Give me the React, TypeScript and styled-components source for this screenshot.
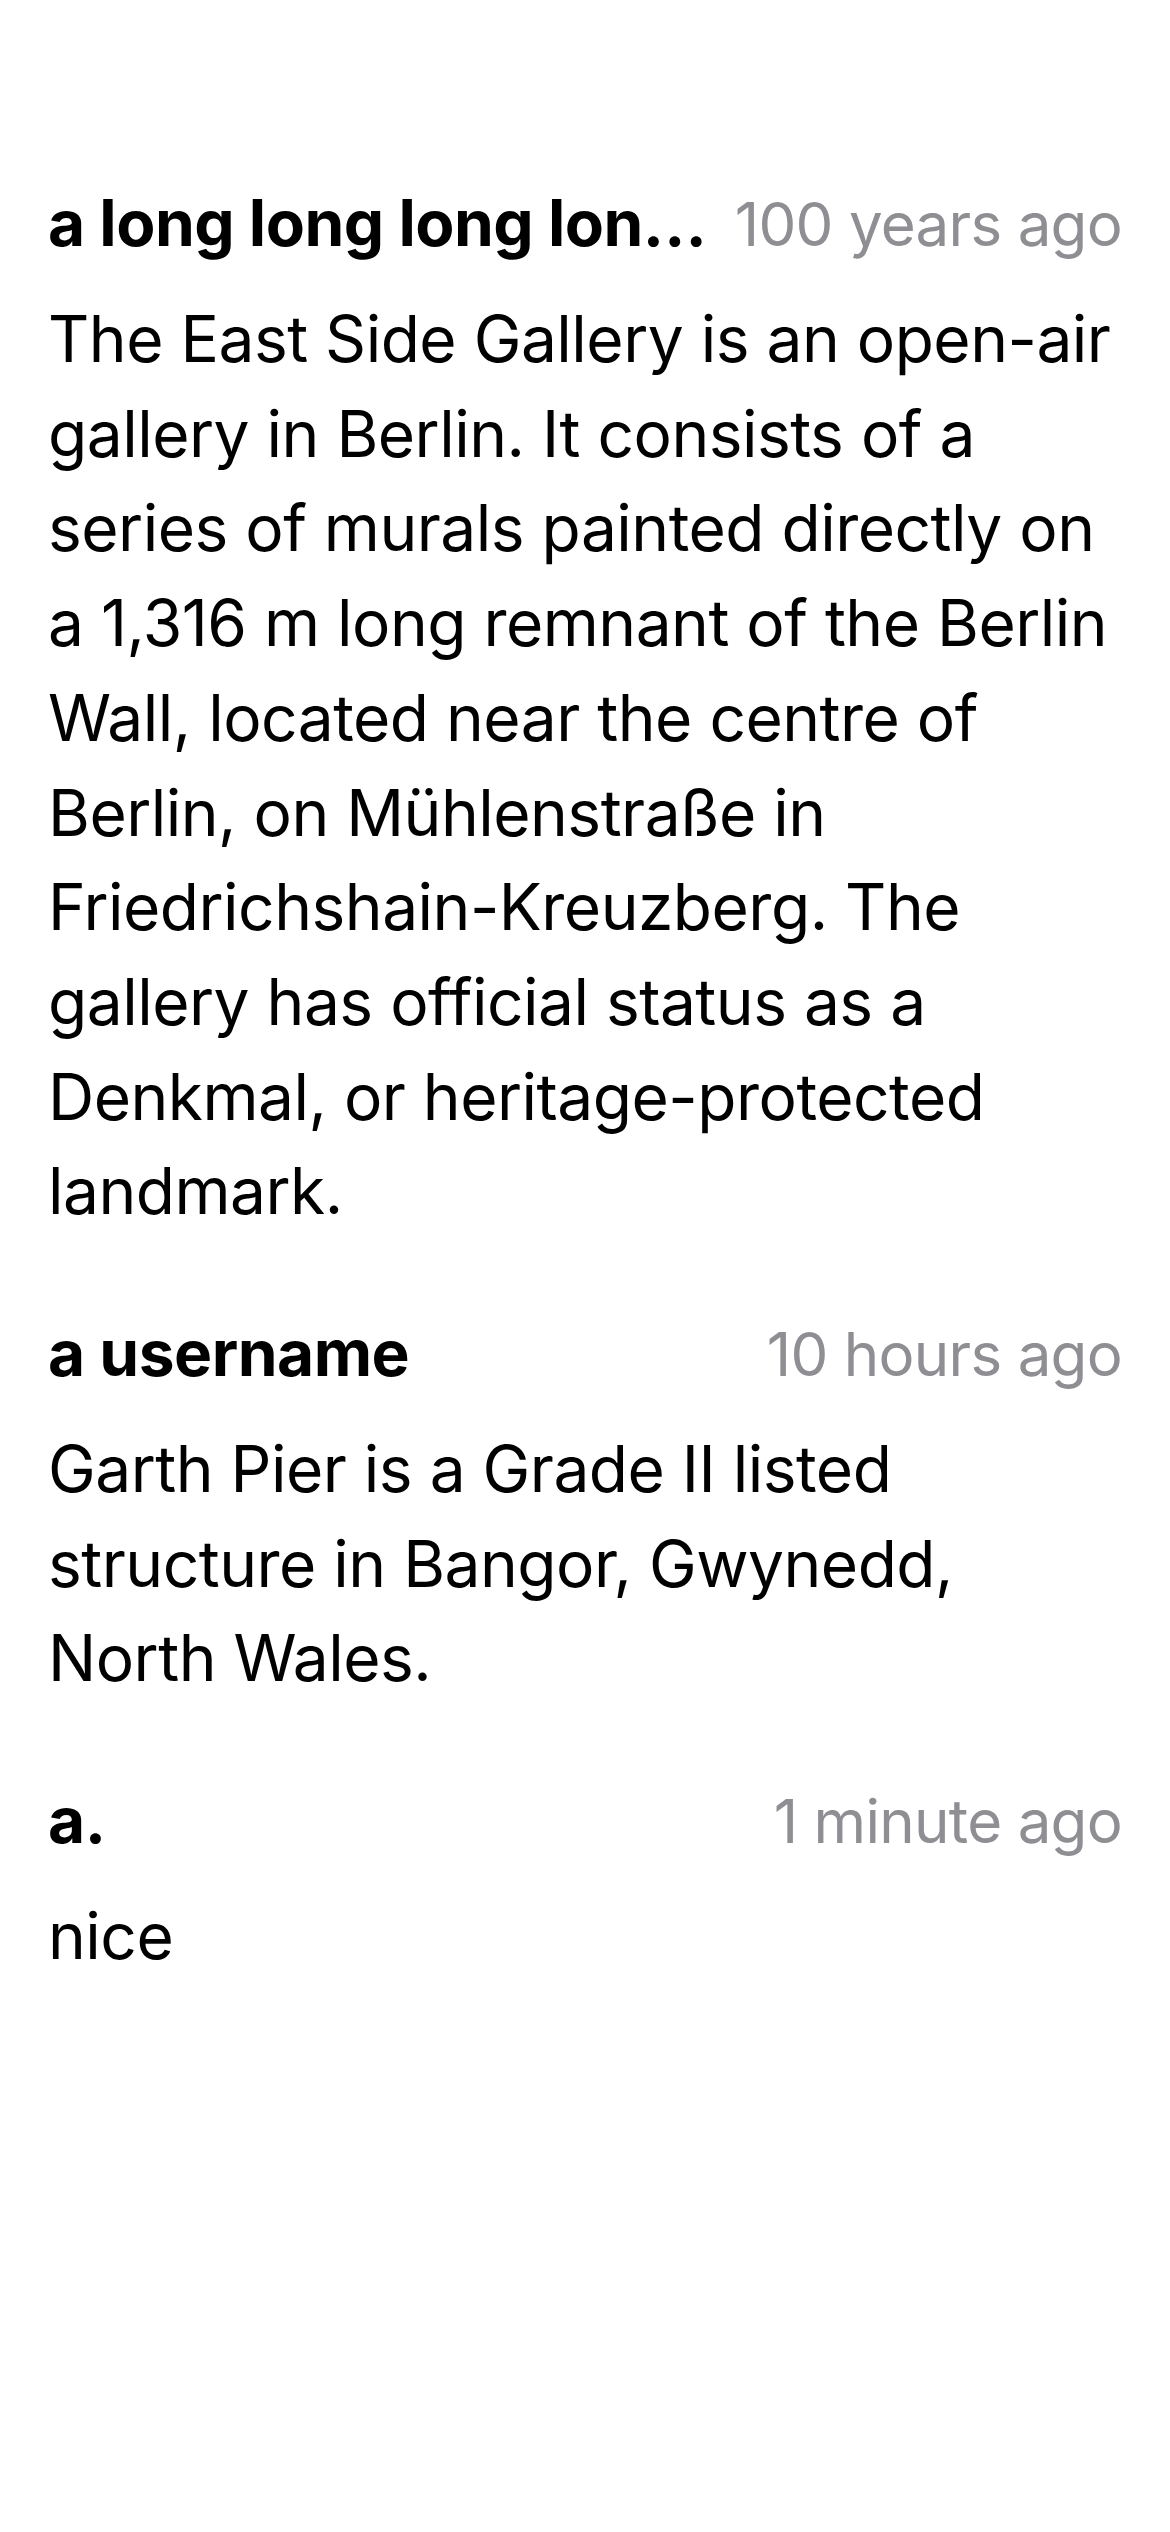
import React from "react";
import styled, { createGlobalStyle } from "styled-components";

const GlobalStyle = createGlobalStyle`
  html, body {
    margin: 0;
    padding: 0;
    background: #ffffff;
  }
  body {
    font-family: Inter, "Noto Sans", "Liberation Sans", sans-serif;
    color: #000000;
    -webkit-font-smoothing: antialiased;
  }
`;

const Page = styled.main`
  display: flex;
  flex-direction: column;
  gap: 74px;
  padding: 183px 48px 120px;
  box-sizing: border-box;
  width: 1170px;
  min-height: 2532px;
  background: #ffffff;
`;

const Comment = styled.article`
  display: flex;
  flex-direction: column;
  gap: 28px;
`;

const Header = styled.header`
  display: flex;
  flex-direction: row;
  align-items: baseline;
  justify-content: space-between;
  gap: 26px;
  min-width: 0;
`;

const Username = styled.span`
  flex: 0 1 auto;
  min-width: 0;
  font-size: 64px;
  line-height: 80px;
  font-weight: 700;
  letter-spacing: -0.5px;
  white-space: nowrap;
  overflow: hidden;
  text-overflow: ellipsis;
`;

const Time = styled.span`
  flex: 0 0 auto;
  font-size: 60px;
  line-height: 80px;
  font-weight: 400;
  letter-spacing: -0.7px;
  color: #8e8e93;
  white-space: nowrap;
`;

const Body = styled.p`
  margin: 0;
  font-size: 64px;
  line-height: 94.7px;
  font-weight: 400;
  letter-spacing: -0.5px;
`;

type CommentData = { user: string; time: string; text: string };

const comments: CommentData[] = [
  {
    user: "a long long long long long long long username",
    time: "100 years ago",
    text:
      "The East Side Gallery is an open-air gallery in Berlin. It consists of a series of murals painted directly on a 1,316 m long remnant of the Berlin Wall, located near the centre of Berlin, on Mühlenstraße in Friedrichshain-Kreuzberg. The gallery has official status as a Denkmal, or heritage-protected landmark.",
  },
  {
    user: "a username",
    time: "10 hours ago",
    text: "Garth Pier is a Grade II listed structure in Bangor, Gwynedd, North Wales.",
  },
  { user: "a.", time: "1 minute ago", text: "nice" },
];

export default function App() {
  return (
    <>
      <GlobalStyle />
      <Page>
        {comments.map((c) => (
          <Comment key={c.time}>
            <Header>
              <Username>{c.user}</Username>
              <Time>{c.time}</Time>
            </Header>
            <Body>{c.text}</Body>
          </Comment>
        ))}
      </Page>
    </>
  );
}
